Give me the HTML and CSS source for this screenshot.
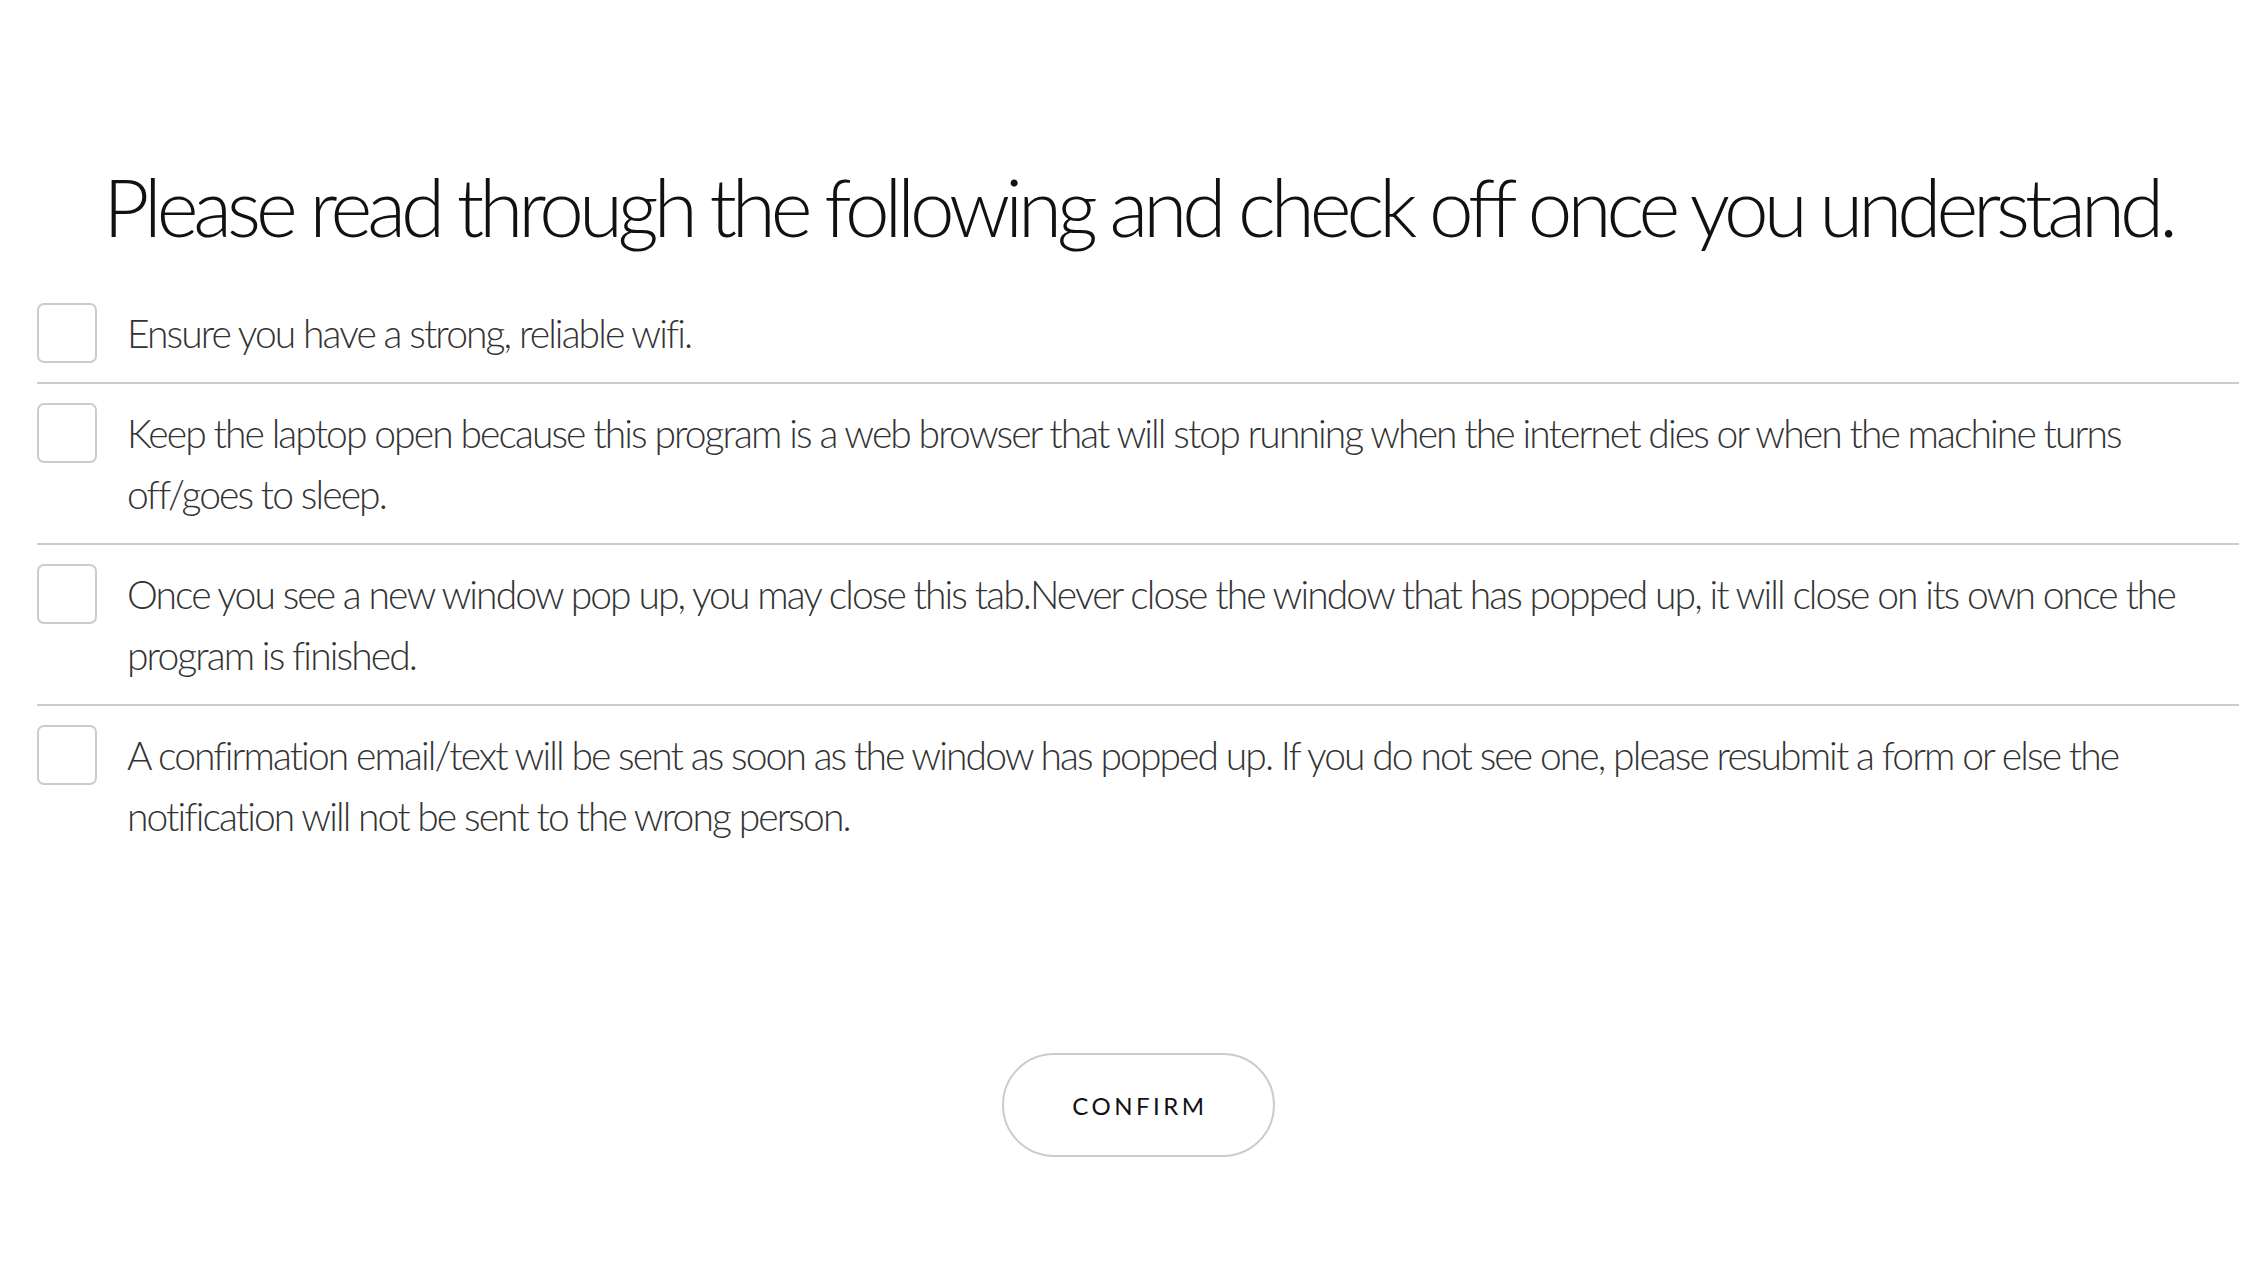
FILE: index.html
```html
<!DOCTYPE html>
<html lang="en">
<head>
<meta charset="utf-8">
<title>Checklist</title>
<link rel="stylesheet" href="styles.css">
</head>
<body>
<main class="page">
  <h1 class="title">Please read through the following and check off once you understand.</h1>
  <ul class="checklist">
    <li class="item">
      <span class="box"></span>
      <p class="label">Ensure you have a strong, reliable wifi.</p>
    </li>
    <li class="item">
      <span class="box"></span>
      <p class="label">Keep the laptop open because this program is a web browser that will stop running when the internet dies or when the machine turns off/goes to sleep.</p>
    </li>
    <li class="item">
      <span class="box"></span>
      <p class="label">Once you see a new window pop up, you may close this tab.Never close the window that has popped up, it will close on its own once the program is finished.</p>
    </li>
    <li class="item">
      <span class="box"></span>
      <p class="label">A confirmation email/text will be sent as soon as the window has popped up. If you do not see one, please resubmit a form or else the notification will not be sent to the wrong person.</p>
    </li>
  </ul>
  <div class="actions">
    <button class="confirm" type="button">CONFIRM</button>
  </div>
</main>
</body>
</html>
```
FILE: styles.css
```css
html, body {
  margin: 0;
  padding: 0;
  background: #ffffff;
}

body {
  font-family: Lato, "Source Sans Pro", "Open Sans", sans-serif;
  color: #333333;
}

.page {
  margin-left: 37px;
  width: 2202px;
  padding-top: 158px;
}

.title {
  margin: 0 0 30px 0;
  font-size: 80px;
  line-height: 1.2;
  font-weight: 300;
  color: #111111;
  text-align: center;
  letter-spacing: -5px;
  white-space: nowrap;
}

.checklist {
  list-style: none;
  margin: 0;
  padding: 0;
}

.item {
  display: flex;
  align-items: flex-start;
  gap: 30px;
  padding: 19px 0 18px 0;
  border-bottom: 2px solid #cccccc;
}

.item:last-child {
  border-bottom: none;
}

.box {
  flex: 0 0 auto;
  width: 56px;
  height: 56px;
  border: 2px solid #cccccc;
  border-radius: 7px;
}

.label {
  margin: 0;
  flex: 1 1 auto;
  font-size: 39px;
  line-height: 61px;
  font-weight: 300;
  letter-spacing: -1.9px;
  font-variant-ligatures: none;
  color: #333333;
}

.actions {
  display: flex;
  justify-content: center;
  padding-top: 188px;
}

.confirm {
  width: 273px;
  height: 104px;
  background: #ffffff;
  border: 2px solid #cccccc;
  border-radius: 52px;
  font-family: Lato, "Source Sans Pro", sans-serif;
  font-size: 24px;
  font-weight: 400;
  letter-spacing: 3.5px;
  color: #111111;
  padding: 0 0 0 4px;
  cursor: pointer;
}
```
